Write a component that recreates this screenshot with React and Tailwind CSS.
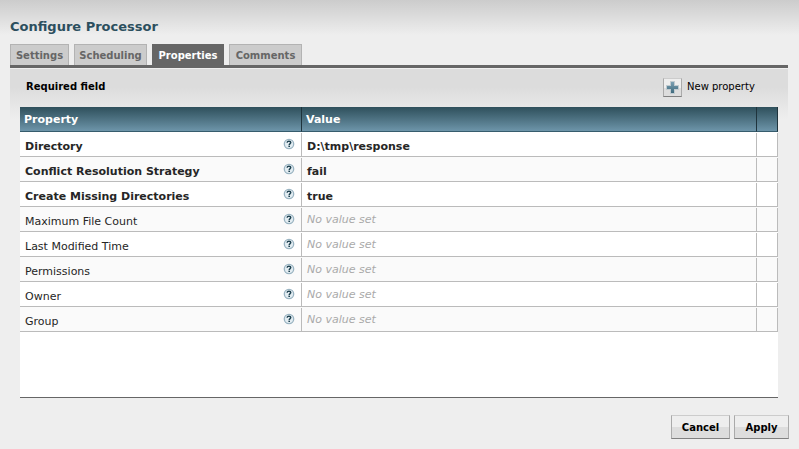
import { useState } from "react";

const tabs = [
  { name: "Settings", width: "w-[59px]" },
  { name: "Scheduling", width: "w-[73px]" },
  { name: "Properties", width: "w-[72px]" },
  { name: "Comments", width: "w-[73px]" },
];

const properties = [
  { name: "Directory", value: "D:\\tmp\\response", required: true },
  { name: "Conflict Resolution Strategy", value: "fail", required: true },
  { name: "Create Missing Directories", value: "true", required: true },
  { name: "Maximum File Count" },
  { name: "Last Modified Time" },
  { name: "Permissions" },
  { name: "Owner" },
  { name: "Group" },
];

function HelpIcon() {
  return (
    <svg width="12" height="12" viewBox="0 0 12 12" aria-hidden="true">
      <circle cx="6" cy="6" r="4.7" fill="#e3edf2" stroke="#9ab4c2" strokeWidth="1.3" />
      <path
        d="M4.2 4.8C4.2 3.7 4.9 3.2 6 3.2s1.8.5 1.8 1.4C7.8 5.6 6.2 5.6 6.2 7"
        fill="none"
        stroke="#1f4251"
        strokeWidth="1.4"
      />
      <rect x="5.4" y="7.6" width="1.6" height="1.4" fill="#1f4251" />
    </svg>
  );
}

function PlusIcon() {
  return (
    <svg width="17" height="17" viewBox="0 0 17 17" aria-hidden="true">
      <defs>
        <linearGradient id="plus" x1="0" y1="0" x2="0" y2="1">
          <stop offset="0" stopColor="#7ba0b3" />
          <stop offset="1" stopColor="#3f6a7d" />
        </linearGradient>
      </defs>
      <path d="M6 2h5v4h4v5h-4v4H6v-4H2V6h4z" fill="#c0cacf" />
      <path d="M7 3h3v4h4v3h-4v4H7v-4H3V7h4z" fill="url(#plus)" />
    </svg>
  );
}

function DialogButton({ children, width }) {
  return (
    <button
      type="button"
      className={`${width} h-6 border border-t-[#cccccc] border-x-[#aaaaaa] border-b-[#808080] bg-linear-to-b from-[#eeeeee] from-50% to-[#dddddd] to-50% pt-[2px] text-[10px] leading-4 font-bold text-black`}
    >
      {children}
    </button>
  );
}

export default function App() {
  const [active, setActive] = useState("Properties");
  return (
    <main className="flex min-h-screen flex-col bg-[#eeeeee] bg-[linear-gradient(to_bottom,#cccccc,#eeeeee_35px)] px-[10px] pt-[18px] pb-[10px] font-['Verdana','DejaVu_Sans',sans-serif] text-[11px] text-[#262626]">
      <h1 className="text-[13px] leading-[18px] font-bold text-[#2c4f5e]">Configure Processor</h1>

      <div role="tablist" className="mt-2 mr-px flex gap-[5px] border-b-[3px] border-[#666666]">
        {tabs.map((tab) => (
          <button
            key={tab.name}
            type="button"
            role="tab"
            aria-selected={active === tab.name}
            onClick={() => setActive(tab.name)}
            className={`${tab.width} h-[21px] border border-b-0 pt-[2px] text-center text-[10px] leading-4 font-bold whitespace-nowrap ${
              active === tab.name
                ? "border-[#666666] bg-[#666666] text-white"
                : "border-[#b3b3b3] bg-[#cccccc] text-[#666666]"
            }`}
          >
            {tab.name}
          </button>
        ))}
      </div>

      <section className="mt-px mr-px flex grow flex-col bg-[linear-gradient(to_bottom,#dcdcdc,#dcdcdc_18px,#eeeeee_50px)] px-[10px]">
        <div className="flex h-[38px] items-center justify-between pr-5 pb-[2px] pl-[6px] text-[10px] leading-4 text-black">
          <span className="font-bold">Required field</span>
          <div className="flex items-center gap-[5px]">
            <button
              id="new-property"
              type="button"
              className="flex size-[19px] items-center justify-center border border-t-[#cccccc] border-x-[#aaaaaa] border-b-[#808080] bg-linear-to-b from-[#eeeeee] from-50% to-[#dddddd] to-50%"
            >
              <PlusIcon />
            </button>
            <label htmlFor="new-property" className="w-[71px]">
              New property
            </label>
          </div>
        </div>

        <div className="grow border-b border-[#666666] bg-white">
          <table className="w-full table-fixed border-separate border-spacing-0">
            <colgroup>
              <col className="w-[282px]" />
              <col />
              <col className="w-[21px]" />
            </colgroup>
            <thead>
              <tr className="h-[25px] bg-linear-to-b from-[#2f505c] to-[#7098ad] text-left text-white">
                <th className="border-r border-b border-[#1f343d] border-b-[#365c6d] p-0 pt-[2px] pl-1 leading-4">Property</th>
                <th className="border-r border-b border-[#1f343d] border-b-[#365c6d] p-0 pt-[2px] pl-1 leading-4">Value</th>
                <th className="border-r border-b border-[#1f343d] border-b-[#365c6d] p-0" aria-label="Actions" />
              </tr>
            </thead>
            <tbody>
              {properties.map((property) => (
                <tr key={property.name} className="h-[25px] odd:bg-white even:bg-[#fafafa]">
                  <td className="border-b border-[#bbbbbb] p-0 pt-px">
                    <div className="flex h-[23px] items-start justify-between border-r border-[#bbbbbb] pr-[6px] pl-[5px]">
                      <span className={`pt-[6px] leading-4 ${property.required ? "font-bold" : ""}`}>
                        {property.name}
                      </span>
                      <button type="button" aria-label={`About ${property.name}`} className="pt-[5px]">
                        <HelpIcon />
                      </button>
                    </div>
                  </td>
                  <td className="border-b border-[#bbbbbb] p-0 pt-px">
                    <div className="h-[23px] border-r border-[#bbbbbb] pl-[5px] leading-4">
                      {property.value ? (
                        <div className="pt-[6px] font-bold">{property.value}</div>
                      ) : (
                        <div className="pt-1 text-[#aaaaaa] italic">No value set</div>
                      )}
                    </div>
                  </td>
                  <td className="border-b border-[#bbbbbb] p-0 pt-px">
                    <div className="h-[23px] border-r border-[#bbbbbb]" />
                  </td>
                </tr>
              ))}
            </tbody>
          </table>
        </div>
      </section>

      <footer className="mt-[17px] flex justify-end gap-1">
        <DialogButton width="w-[59px]">Cancel</DialogButton>
        <DialogButton width="w-[55px]">Apply</DialogButton>
      </footer>
    </main>
  );
}
